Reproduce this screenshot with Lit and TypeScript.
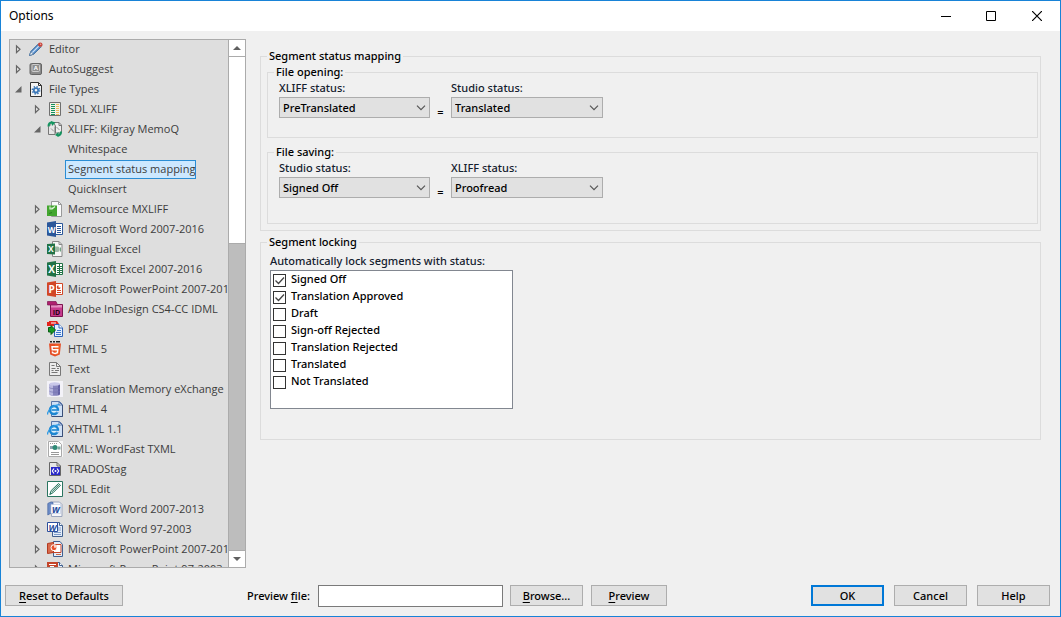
import { LitElement, html, css, svg, nothing, TemplateResult } from "lit";
import { customElement, property } from "lit/decorators.js";
import { classMap } from "lit/directives/class-map.js";

const officeTile = (color: string, letter: string, size: number, page: TemplateResult) => svg`
  <path d="M8 2.500h7.500v11H8z" fill="#fff" stroke=${color}/>
  ${page}
  <path d="M0 1.500L9 0v16L0 14.500z" fill=${color}/>
  <text x="4.600" y="11.500" font-size=${size} font-weight="700" text-anchor="middle" fill="#fff">${letter}</text>`;

const oldOffice = (color: string, letter: string) => svg`
  <path d="M5.500 1.500h7l3 3v11h-10z" fill="#e4ecf8" stroke="#41608f"/>
  <path d="M12.500 1.500v3h3" fill="#fff" stroke="#41608f"/>
  <path d="M11 7h3M11 9h3M7 11.500h7M7 13.500h7" stroke="#7d9bc8"/>
  <path d="M.5 1.500h10v9H.5z" fill="#fff" stroke=${color}/>
  <text x="5.500" y="9.500" font-size="9" font-weight="700" font-style="italic" text-anchor="middle" fill=${color}>${letter}</text>`;

const browserPage = svg`
  <path d="M4.500.5h8l3 3v12h-11z" fill="#cfe0f5" stroke="#5a76a8"/>
  <path d="M12 1v3h3z" fill="#fff" stroke="#5a76a8"/>
  <path d="M5 15.500h10.500V4" fill="none" stroke="#3a4f78"/>
  <circle cx="7" cy="9" r="4" fill="#d9f0fc" stroke="#1c86d1" stroke-width="2.400"/>
  <path d="M4.500 9h7" stroke="#1c86d1" stroke-width="1.600"/>
  <path d="M9.500 10.600h4" stroke="#cfe0f5" stroke-width="1.500"/>
  <path d="M.8 13.500C-.5 10 6 4 12.500 3.500" fill="none" stroke="#2f9be4" stroke-width="1.300"/>`;

const icons: Record<string, TemplateResult> = {
  editor: svg`
    <path d="M1.500 14.500l1.300-4L10 3.300l2.800 2.800-7.200 7.100z" fill="#5b92cf" stroke="#336699"/>
    <path d="M4 11.800l7-7" stroke="#cfe2f5" stroke-width="1.200"/>
    <path d="M1.500 14.500l1.300-4 2.800 2.700z" fill="#e8edf3" stroke="#55789f" stroke-width=".8"/>
    <path d="M10 3.300L11.300 2l2.800 2.800-1.300 1.300z" fill="#ddd" stroke="#777" stroke-width=".6"/>
    <circle cx="12.300" cy="3.600" r="2.200" fill="#c8443c"/>
    <circle cx="12.600" cy="3.300" r=".8" fill="#f0a9a0"/>`,
  suggest: svg`
    <rect x="2" y="2.500" width="11.500" height="11" rx="1.500" fill="#8b8b8b" stroke="#666"/>
    <rect x="4" y="3.500" width="7.500" height="7" rx="1" fill="#8f8f8f" stroke="#dcdcdc" stroke-width=".8"/>
    <text x="7.750" y="9.200" font-size="6" font-weight="700" text-anchor="middle" fill="#fff">A</text>`,
  types: svg`
    <path d="M2.500 1.500h8l3 3v11h-11z" fill="#f4f4f4" stroke="#333"/>
    <path d="M10.500 1.500v3h3" fill="none" stroke="#333"/>
    <circle cx="8" cy="9.300" r="3.600" fill="none" stroke="#3c78b8" stroke-width="1.600" stroke-dasharray="1.420 1.410"/>
    <circle cx="8" cy="9.300" r="2.200" fill="none" stroke="#3c78b8" stroke-width="1.800"/>`,
  sdl: svg`
    <path d="M2.500 1.500h11v13h-11z" fill="#f1f1e6" stroke="#6f6f6f"/>
    <path d="M4 3.500h4M4 5.500h4M4 7.500h4M4 9.500h4M4 11.500h4" stroke="#12915e"/>
    <path d="M9 3.500h3M9 5.500h3M9 7.500h3M9 9.500h3M9 11.500h3" stroke="#e9b95c"/>
    <path d="M4 13.500h4" stroke="#12915e"/><path d="M9 13.500h3" stroke="#e9b95c"/>`,
  memoq: svg`
    <path d="M4 3.500L1.500 5.500v8H8v-8" fill="#e6e6e6" stroke="#777"/>
    <path d="M6.500 1.500h5.500l2.500 2.500V12h-6V5z" fill="#eee" stroke="#777"/>
    <path d="M12 1.500v3h2.500" fill="none" stroke="#777"/>
    <path d="M1.500 5.500C1.500 3 3 1.500 5 1.500" fill="none" stroke="#13945f" stroke-width="2"/>
    <path d="M4 0l4.500 1.500L5 5z" fill="#13945f"/>
    <path d="M14 10.500c0 2.500-1 4-3.500 4" fill="none" stroke="#13945f" stroke-width="2"/>
    <path d="M11.500 11v5L8 14z" fill="#13945f"/>
    <path d="M4 7.500l3 3M9.500 6l3 3" stroke="#999"/>`,
  memsource: svg`
    <path d="M4.500.5h7l3 3v12h-10z" fill="#fafafa" stroke="#999"/>
    <path d="M11.500.5v3h3" fill="none" stroke="#999"/>
    <path d="M0 4.500h10V15H0z" fill="#43a62f"/>
    <path d="M3 5.500v2.500h2V6.500M5 8l3-2.500" fill="none" stroke="#e4f5df" stroke-width="1.200"/>
    <path d="M2 12.500l3-1" stroke="#2b8020"/>`,
  word16: officeTile("#2b579a", "W", 8, svg`<path d="M10 5.500h4M10 7.500h4M10 9.500h4M10 11.500h4" stroke="#2b579a"/>`),
  biexcel: svg`
    <path d="M5.500.5h6.500l3 3v12H5.500z" fill="#f6f6f6" stroke="#888"/>
    <path d="M12 .5v3h3" fill="none" stroke="#888"/>
    <path d="M0 3l8-.5v11L0 13z" fill="#217346"/>
    <text x="4" y="11" font-size="8" font-weight="700" text-anchor="middle" fill="#fff">X</text>
    <path d="M8 5.500h2.500c3 0 3 5.500 0 5.500H8" fill="#9db8a6"/><path d="M13.500 6.500v4" stroke="#6fa583"/>`,
  excel16: officeTile("#217346", "X", 10, svg`<path d="M10 5.500h5M10 7.500h5M10 9.500h5M10 11.500h5M12.500 3v10" stroke="#217346"/>`),
  ppt16: officeTile("#d24726", "P", 10, svg`<path d="M10 9.500h4M10 11.500h4" stroke="#d24726"/><path d="M11.500 4.300a2 2 0 1 0 2.200 2.200h-2.200z" fill="#d24726"/>`),
  indesign: svg`
    <path d="M3.500 3.500h12v12h-12z" fill="#c8398c" stroke="#7c1450"/>
    <path d="M4 4h11v2.500H4z" fill="#e58cc0"/>
    <path d="M.5.5H9l1.500 3.500H.5z" fill="#b0206f" stroke="#7c1450" stroke-width=".7"/>
    <text x="9.500" y="13.500" font-size="7" font-weight="700" text-anchor="middle" fill="#250014">ID</text>`,
  pdf: svg`
    <path d="M0 1h2V0h8l2 3v2H0z" fill="#e3221c"/><path d="M4 2h5" stroke="#fff"/>
    <path d="M7.500 3.500h4.500l3.500 3.500v8.500h-8z" fill="#e5f0ff" stroke="#2d62b8"/>
    <path d="M12 3.500V7h3.500" fill="#fff" stroke="#2d62b8"/>
    <path d="M10 9.500h4M9 11.500h5M9 13.500h5" stroke="#3a78cc"/>
    <path d="M1.500 6.500h2.500V4.500L8.500 9 4 13.500v-2.500H1.500z" fill="#159a22" stroke="#0b5d14"/>`,
  html5: svg`
    <path d="M3 .8h2M6 .8h2M9 .8h4" stroke="#222" stroke-width="1.500"/>
    <path d="M2 2.500h12l-1.200 11L8 15.500l-4.800-2z" fill="#e44d26"/>
    <path d="M8 3.500h5l-1 9.300-4 1.500z" fill="#f16529"/>
    <path d="M11.500 5.700H5l.3 3h5.500l-.4 3L8 12.600l-2.500-.9-.1-1.200" fill="none" stroke="#fff" stroke-width="1.400"/>`,
  text: svg`
    <path d="M2.500 1.500h7l4 4v9h-11z" fill="#ececec" stroke="#777"/>
    <path d="M9.500 1.500v4h4" fill="none" stroke="#777"/>
    <path d="M4.500 4.500h3M4.500 7.500h4M10 7.500h2M4.500 9.500h2M8 9.500h4M4.500 11.500h6" stroke="#777"/>`,
  tmx: svg`
    <path d="M0 0h16v16H0z" fill="#f3f2f8"/>
    <path d="M2.500 3v10.500c0 1.700 10.500 1.700 10.500 0V3z" fill="#8583bd"/>
    <path d="M3 3v10.500c1 .8 2 1 3 1V3z" fill="#b9b8df"/>
    <path d="M11 3v11c1-.2 2-.5 2-1V3z" fill="#625fa3"/>
    <ellipse cx="7.750" cy="3" rx="5.250" ry="1.700" fill="#c9c8ea"/>
    <path d="M2.500 6.700c1 1.300 9.500 1.300 10.500 0M2.500 10.200c1 1.300 9.500 1.300 10.500 0" fill="none" stroke="#7472b0" stroke-width=".7"/>`,
  browser: browserPage,
  txml: svg`
    <path d="M0 0h16v16H0z" fill="#f6f6f6"/>
    <path d="M1.500.5h10l3 3v12h-13z" fill="#fff" stroke="#aaa"/>
    <path d="M3 2.500h7" stroke="#999" stroke-dasharray="1 1"/>
    <path d="M3 5h3v3H3z" fill="#8fa3b0"/><circle cx="8" cy="6.500" r="2.500" fill="#2f8a76"/><path d="M10.500 5.500h3v3h-3z" fill="#79a8a0"/>
    <path d="M4 11.500h8M4 13.500h8" stroke="#999"/>`,
  trados: svg`
    <path d="M2.500 1.500h7.500l3.500 3.500v9.500h-11z" fill="#e6e6e6" stroke="#666"/>
    <path d="M10 1.500V5h3.500" fill="none" stroke="#666"/>
    <path d="M4 6h9v8H4z" fill="#2828c8"/>
    <path d="M7 7.500L5.300 10 7 12.500M10 7.500l1.700 2.500-1.700 2.500" fill="none" stroke="#fff" stroke-width="1.200"/>
    <circle cx="8.500" cy="10" r="1" fill="#fff"/>`,
  sdledit: svg`
    <path d="M.5.5h15v15H.5z" fill="#fff" stroke="#2a7560"/>
    <path d="M3 13l1.200-3.500L11.500 2.500l2 1.800L6 11.800z" fill="#e3efeb" stroke="#2a7560"/>
    <path d="M5 10.800l7-7" stroke="#2a7560"/><path d="M2.500 13.500l2-.8" stroke="#2a7560"/>`,
  word13: svg`
    <path d="M3.500 1h9l2.500 2.500V15.500H4.500z" fill="#f5f6fa" stroke="#9aa5bd"/>
    <path d="M.8 2.500C3 1 4.500 1 6 1.500v11C4.500 12 3 12.500.8 14z" fill="#6d8cc7" stroke="#4464a2" stroke-width=".7"/>
    <path d="M4 3.500h9.500v9H4z" fill="#fff" stroke="#b7c3dc" stroke-width=".6"/>
    <text x="9" y="12" font-size="10" font-weight="700" font-style="italic" text-anchor="middle" fill="#2c50a0">w</text>`,
  word97: oldOffice("#2b4f9e", "W"),
  ppt13: svg`
    <path d="M6.500.5h6.500l2.500 3v12h-9z" fill="#e4ecf8" stroke="#41608f"/>
    <path d="M9 13.500h5" stroke="#cc6a4a"/>
    <path d="M4.500 3.500h9.500v8H4.500z" fill="#fff" stroke="#c4452a"/>
    <path d="M.5 2.500l6-1v10l-6 1z" fill="#d86a4c" stroke="#b23a20"/>
    <circle cx="7" cy="6.700" r="3" fill="#e8532e" stroke="#fff"/><path d="M7 6.700V4h2.800v2.700z" fill="#fbd5c8"/>`,
  ppt97: svg`
    <path d="M5.500 1.500h7l3 3v11h-10z" fill="#e4ecf8" stroke="#41608f"/>
    <path d="M12.500 1.500v3h3" fill="#fff" stroke="#41608f"/>
    <path d="M0 1h11v11H0z" fill="#c4452a"/>
    <path d="M2 3.500h7M3 5.500h4" stroke="#fff"/>`,
};

type Row = { label: string; level: 0 | 1 | 2; icon?: string; open?: boolean; selected?: boolean };

const rows: Row[] = [
  { label: "Editor", level: 0, icon: "editor" },
  { label: "AutoSuggest", level: 0, icon: "suggest" },
  { label: "File Types", level: 0, icon: "types", open: true },
  { label: "SDL XLIFF", level: 1, icon: "sdl" },
  { label: "XLIFF: Kilgray MemoQ", level: 1, icon: "memoq", open: true },
  { label: "Whitespace", level: 2 },
  { label: "Segment status mapping", level: 2, selected: true },
  { label: "QuickInsert", level: 2 },
  { label: "Memsource MXLIFF", level: 1, icon: "memsource" },
  { label: "Microsoft Word 2007-2016", level: 1, icon: "word16" },
  { label: "Bilingual Excel", level: 1, icon: "biexcel" },
  { label: "Microsoft Excel 2007-2016", level: 1, icon: "excel16" },
  { label: "Microsoft PowerPoint 2007-201", level: 1, icon: "ppt16" },
  { label: "Adobe InDesign CS4-CC IDML", level: 1, icon: "indesign" },
  { label: "PDF", level: 1, icon: "pdf" },
  { label: "HTML 5", level: 1, icon: "html5" },
  { label: "Text", level: 1, icon: "text" },
  { label: "Translation Memory eXchange", level: 1, icon: "tmx" },
  { label: "HTML 4", level: 1, icon: "browser" },
  { label: "XHTML 1.1", level: 1, icon: "browser" },
  { label: "XML: WordFast TXML", level: 1, icon: "txml" },
  { label: "TRADOStag", level: 1, icon: "trados" },
  { label: "SDL Edit", level: 1, icon: "sdledit" },
  { label: "Microsoft Word 2007-2013", level: 1, icon: "word13" },
  { label: "Microsoft Word 97-2003", level: 1, icon: "word97" },
  { label: "Microsoft PowerPoint 2007-201", level: 1, icon: "ppt13" },
  { label: "Microsoft PowerPoint 97-2003", level: 1, icon: "ppt97" },
];

@customElement("options-tree")
class OptionsTree extends LitElement {
  static styles = css`
    :host { display: flex; min-height: 0; border: 1px solid #ababab; background: #dedede; box-sizing: border-box; }
    .list { flex: 1; min-width: 0; overflow: hidden; margin: -1px 0 0; padding: 0; list-style: none; }
    .row { display: flex; align-items: center; height: 20px; padding-left: 3px; gap: 4px; white-space: nowrap; }
    .level1 { padding-left: 22px; }
    .level2 { padding-left: 55px; }
    .arrow { flex: none; width: 11px; height: 10px; }
    .icon { flex: none; width: 16px; height: 16px; font-family: "Open Sans", sans-serif; }
    .label { border: 1px solid transparent; padding: 0 0 2px 2px; line-height: 15px; font-family: "Open Sans", "Noto Sans", sans-serif; font-weight: 400; font-size: 11px; color: #3c3c3c; }
    .withicon { padding-left: 0; }
    .selected { background: #cce8ff; border-color: #2a8dd4; }
    .scroll { display: flex; flex-direction: column; flex: none; width: 17px; box-sizing: border-box; border-left: 1px solid #ababab; background: #bdbdbd; }
    .end { display: flex; align-items: center; justify-content: center; flex: none; height: 17px; padding: 0; border: 0; background: #fff; border-bottom: 1px solid #ababab; }
    .down { border-bottom: 0; border-top: 1px solid #ababab; }
    .rail { flex: 1; }
    .thumb { height: 38%; background: #fff; border-bottom: 1px solid #ababab; box-sizing: border-box; }
  `;

  render() {
    return html`
      <ul class="list" role="tree" aria-label="Option pages">
        ${rows.map((r) => html`
          <li class=${"row level" + r.level} role="treeitem" aria-selected=${r.selected ? "true" : "false"}>
            ${r.level < 2
              ? html`<svg class="arrow" viewBox="0 0 11 10">
                  ${r.open
                    ? svg`<path d="M8.500 2v6.500H2z" fill="#666"/>`
                    : svg`<path d="M3.500 2v6.500L7 5.250z" fill="#eee" stroke="#666" stroke-width="1.200"/>`}
                </svg>`
              : nothing}
            ${r.icon ? html`<svg class="icon" viewBox="0 0 16 16">${icons[r.icon]}</svg>` : nothing}
            <span class=${classMap({ label: true, withicon: !!r.icon, selected: !!r.selected })}>${r.label}</span>
          </li>`)}
      </ul>
      <div class="scroll">
        <button class="end" aria-label="Scroll up"><svg width="8" height="4" viewBox="0 0 8 4"><path d="M4 0l4 4H0z" fill="#606060"/></svg></button>
        <div class="rail"><div class="thumb"></div></div>
        <button class="end down" aria-label="Scroll down"><svg width="8" height="4" viewBox="0 0 8 4"><path d="M0 0h8L4 4z" fill="#606060"/></svg></button>
      </div>`;
  }
}

@customElement("status-pair")
class StatusPair extends LitElement {
  @property() left = "";
  @property() right = "";
  @property() leftValue = "";
  @property() rightValue = "";

  static styles = css`
    :host { display: grid; grid-template-columns: 151px 21px 152px; }
    .caption { line-height: 15px; padding-bottom: 2px; color: #14202e; }
    .equals { grid-row: 2; grid-column: 2; text-align: center; line-height: 30px; height: 21px; }
    .right { grid-column: 3; }
    .box { grid-row: 2; position: relative; display: flex; }
    .pick { appearance: none; flex: 1; min-width: 0; height: 21px; margin: 0; padding: 0 20px 0 3px; border: 1px solid #adadad; border-radius: 0; background: #e1e1e1; font: inherit; color: #000; }
    .chevron { position: absolute; right: 4px; top: 8px; pointer-events: none; }
  `;

  private pick(id: string, value: string, side: string) {
    return html`<span class=${"box " + side}>
      <select class="pick" id=${id}><option>${value}</option></select>
      <svg class="chevron" width="10" height="6" viewBox="0 0 10 6"><path d="M1 .7l4 4 4-4" fill="none" stroke="#555" stroke-width="1.200"/></svg>
    </span>`;
  }

  render() {
    return html`
      <label class="caption" for="a">${this.left}</label>
      <label class="caption right" for="b">${this.right}</label>
      ${this.pick("a", this.leftValue, "")}
      <span class="equals">=</span>
      ${this.pick("b", this.rightValue, "right")}`;
  }
}

const locks: [string, boolean][] = [
  ["Signed Off", true],
  ["Translation Approved", true],
  ["Draft", false],
  ["Sign-off Rejected", false],
  ["Translation Rejected", false],
  ["Translated", false],
  ["Not Translated", false],
];

@customElement("app-root")
class AppRoot extends LitElement {
  static styles = css`
    :host { display: flex; flex-direction: column; height: 100vh; box-sizing: border-box; border: 1px solid #1883d7; background: #f0f0f0; font: 500 11px/16px "Noto Sans", "Open Sans", sans-serif; color: #000; }
    .title { display: flex; align-items: center; flex: none; height: 30px; background: #fff; padding-left: 8px; }
    .name { flex: 1; margin: 0; font-size: 12px; font-weight: 400; }
    .win { display: flex; align-items: center; justify-content: center; width: 46px; height: 30px; padding: 0; border: 0; background: none; }
    .main { flex: 1; min-height: 0; display: grid; grid-template-columns: 237px minmax(0, 1fr); gap: 14px; padding: 8px 19px 17px 8px; }
    .group { margin: 0; padding: 0 2px 6px 6px; border: 1px solid #dcdcdc; min-width: 0; }
    .group legend { padding: 0 2px; line-height: 16px; }
    .page { padding-top: 9px; display: flex; flex-direction: column; gap: 3px; }
    .stack { display: flex; flex-direction: column; gap: 6px; }
    .pair { padding-left: 5px; padding-bottom: 13px; }
    .saving { padding-bottom: 19px; }
    .locking { padding: 3px 6px 24px 3px; }
    .caption { display: block; color: #14202e; line-height: 15px; padding-bottom: 2px; }
    .checks { width: 243px; height: 139px; box-sizing: border-box; border: 1px solid #828790; background: #fff; padding-left: 2px; }
    .check { display: flex; gap: 5px; line-height: 15px; height: 17px; }
    .tick { appearance: none; flex: none; width: 13px; height: 13px; margin: 3px 0 0; border: 1px solid #333; background: #fff; }
    .mark { position: absolute; left: 1px; top: 4px; pointer-events: none; }
    .boxed { position: relative; display: flex; }
    .foot { flex: none; display: flex; align-items: flex-start; padding: 0 10px 9px 4px; }
    .btn { height: 21px; min-width: 73px; padding: 0; border: 1px solid #adadad; background: #e1e1e1; font: inherit; color: #000; }
    .reset { width: 118px; margin-right: 124px; }
    .file { line-height: 21px; width: 71px; }
    .path { width: 185px; height: 22px; box-sizing: border-box; margin: 0 7px 0 0; padding: 0 3px; border: 1px solid #7a7a7a; border-radius: 0; font: inherit; }
    .preview { width: 76px; margin-left: 8px; }
    .actions { margin-left: auto; display: flex; gap: 10px; }
    .default { border: 2px solid #0078d7; }
    u { text-underline-offset: 2px; }
  `;

  render() {
    return html`
      <header class="title">
        <h1 class="name">Options</h1>
        <button class="win" aria-label="Minimize"><svg width="12" height="10"><path d="M2 5.500h10" stroke="#000"/></svg></button>
        <button class="win" aria-label="Maximize"><svg width="10" height="10"><path d="M.5.5h9v9h-9z" fill="none" stroke="#000"/></svg></button>
        <button class="win" aria-label="Close"><svg width="10" height="10"><path d="M0 0l10 10M10 0L0 10" stroke="#000" stroke-width="1.200"/></svg></button>
      </header>
      <main class="main">
        <options-tree></options-tree>
        <div class="page">
          <fieldset class="group">
            <legend>Segment status mapping</legend>
            <div class="stack">
              <fieldset class="group">
                <legend>File opening:</legend>
                <div class="pair"><status-pair left="XLIFF status:" right="Studio status:" leftValue="PreTranslated" rightValue="Translated"></status-pair></div>
              </fieldset>
              <fieldset class="group">
                <legend>File saving:</legend>
                <div class="pair saving"><status-pair left="Studio status:" right="XLIFF status:" leftValue="Signed Off" rightValue="Proofread"></status-pair></div>
              </fieldset>
            </div>
          </fieldset>
          <fieldset class="group">
            <legend>Segment locking</legend>
            <div class="locking" role="group" aria-labelledby="locks">
              <span class="caption" id="locks">Automatically lock segments with status:</span>
              <div class="checks">
                ${locks.map(([name, on]) => html`
                  <label class="check">
                    <span class="boxed">
                      <input class="tick" type="checkbox" .checked=${on}>
                      ${on ? html`<svg class="mark" width="11" height="11" viewBox="0 0 11 11"><path d="M1.500 5.500L4.500 8.500 10 2.500" fill="none" stroke="#444" stroke-width="1.300"/></svg>` : nothing}
                    </span>
                    ${name}
                  </label>`)}
              </div>
            </div>
          </fieldset>
        </div>
      </main>
      <footer class="foot">
        <button class="btn reset"><u>R</u>eset to Defaults</button>
        <label class="file" for="path">Preview <u>f</u>ile:</label>
        <input class="path" id="path" type="text">
        <button class="btn"><u>B</u>rowse...</button>
        <button class="btn preview"><u>P</u>review</button>
        <div class="actions">
          <button class="btn default">OK</button>
          <button class="btn">Cancel</button>
          <button class="btn">Help</button>
        </div>
      </footer>`;
  }
}
